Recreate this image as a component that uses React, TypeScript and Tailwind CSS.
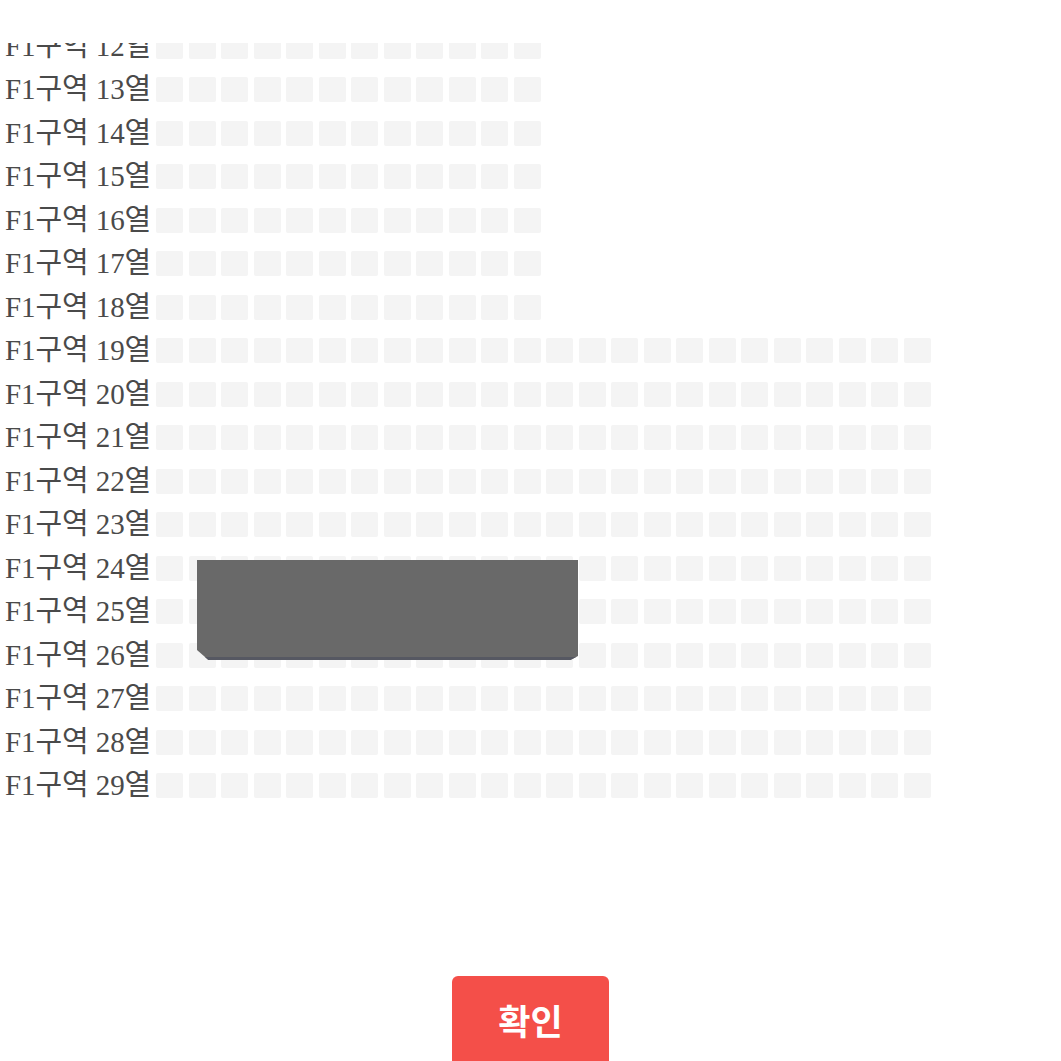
const rows = Array.from({ length: 18 }, (_, i) => {
    const n = i + 12;
    return { n, seats: n < 19 ? 12 : 24 };
});

function SeatRow({ n, seats }: { n: number; seats: number }) {
    return (
        <div className="flex h-[43.5px] items-center">
            <div className="w-[156px] shrink-0 pl-[5px] text-[29px] leading-none tracking-[-0.1px] whitespace-nowrap text-[#4a4a4a] [font-family:'Liberation_Serif','Noto_Sans_CJK_KR',serif]">
                F1구역 {n}열
            </div>
            <div className="flex gap-[5.5px]">
                {Array.from({ length: seats }, (_, s) => (
                    <div key={s} className="h-[25px] w-[27px] rounded-[2px] bg-[#f4f4f4]" />
                ))}
            </div>
        </div>
    );
}

export default function App() {
    return (
        <div className="relative h-[1061px] w-[1061px] overflow-hidden bg-white">
            <div className="relative z-10 h-[43px] bg-white" />
            <div className="relative overflow-hidden">
                <div className="-mt-[18.75px]">
                    {rows.map((r) => (
                        <SeatRow key={r.n} n={r.n} seats={r.seats} />
                    ))}
                </div>
            </div>

            {/* covered block over rows 24-26 */}
            <div className="absolute top-[560px] left-[197px] h-[100px] w-[381px] border-b-[3px] border-[#565862] bg-[#696969] [clip-path:polygon(0_0,100%_0,100%_96%,98%_100%,3%_100%,0_90%)]" />

            <div className="mt-[169px] flex justify-center">
                <div className="h-[100px] w-[157px] rounded-t-[6px] bg-[#f44f49] pt-[22px] text-center text-[35px] leading-[44px] font-bold text-white [font-family:'Noto_Sans_CJK_KR',sans-serif]">
                    확인
                </div>
            </div>
        </div>
    );
}
